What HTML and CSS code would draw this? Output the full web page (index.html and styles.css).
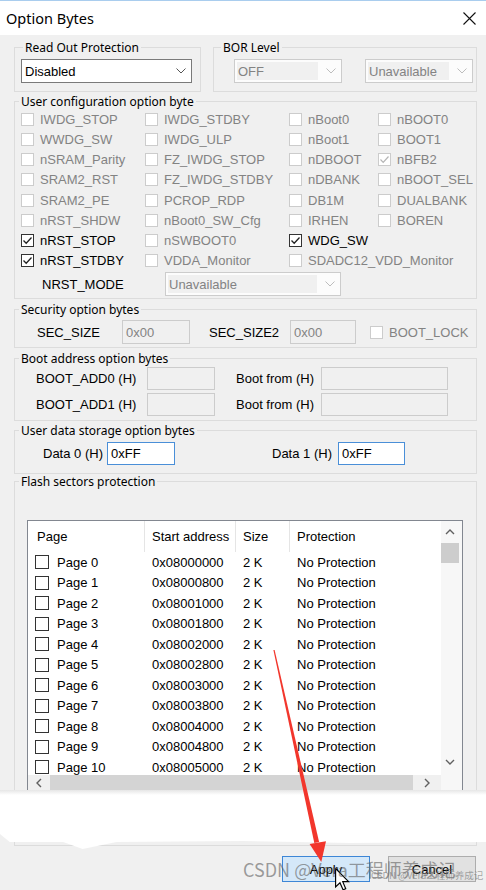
FILE: index.html
```html
<!DOCTYPE html>
<html>
<head>
<meta charset="utf-8">
<link rel="stylesheet" href="styles.css">
</head>
<body>
<div class="window">
  <div class="titlebar">
    <span class="title">Option Bytes</span>
    <svg class="close" width="13" height="13" viewBox="0 0 13 13"><path d="M0.5 0.5 L12.5 12.5 M12.5 0.5 L0.5 12.5" stroke="#111" stroke-width="1.1" fill="none"/></svg>
  </div>

  <div class="client">
    <div class="toprow">
      <div class="group g-rop">
        <span class="legend">Read Out Protection</span>
        <div class="combo rop-combo"><span class="val">Disabled</span><svg width="10" height="6" viewBox="0 0 10 6"><path d="M0.5 0.5 L5 5 L9.5 0.5" fill="none" stroke="#555"/></svg></div>
      </div>
      <div class="group g-bor">
        <span class="legend">BOR Level</span>
        <div class="bor-row">
          <div class="combo dis"><span class="val">OFF</span><svg width="10" height="6" viewBox="0 0 10 6"><path d="M0.5 0.5 L5 5 L9.5 0.5" fill="none" stroke="#bdbdbd"/></svg></div>
          <div class="combo dis"><span class="val">Unavailable</span><svg width="10" height="6" viewBox="0 0 10 6"><path d="M0.5 0.5 L5 5 L9.5 0.5" fill="none" stroke="#bdbdbd"/></svg></div>
        </div>
      </div>
    </div>

    <div class="group g-user">
      <span class="legend wide">User configuration option byte</span>
      <div class="opts">
        <label class="opt dis"><span class="box"></span>IWDG_STOP</label>
        <label class="opt dis"><span class="box"></span>IWDG_STDBY</label>
        <label class="opt dis"><span class="box"></span>nBoot0</label>
        <label class="opt dis"><span class="box"></span>nBOOT0</label>

        <label class="opt dis"><span class="box"></span>WWDG_SW</label>
        <label class="opt dis"><span class="box"></span>IWDG_ULP</label>
        <label class="opt dis"><span class="box"></span>nBoot1</label>
        <label class="opt dis"><span class="box"></span>BOOT1</label>

        <label class="opt dis"><span class="box"></span>nSRAM_Parity</label>
        <label class="opt dis"><span class="box"></span>FZ_IWDG_STOP</label>
        <label class="opt dis"><span class="box"></span>nDBOOT</label>
        <label class="opt dis"><span class="box"><svg width="11" height="11" viewBox="0 0 11 11"><path d="M1.5 5.5 L4.2 8.3 L9.5 2.5" fill="none" stroke="#b5b5b5" stroke-width="1.2"/></svg></span>nBFB2</label>

        <label class="opt dis"><span class="box"></span>SRAM2_RST</label>
        <label class="opt dis"><span class="box"></span>FZ_IWDG_STDBY</label>
        <label class="opt dis"><span class="box"></span>nDBANK</label>
        <label class="opt dis"><span class="box"></span>nBOOT_SEL</label>

        <label class="opt dis"><span class="box"></span>SRAM2_PE</label>
        <label class="opt dis"><span class="box"></span>PCROP_RDP</label>
        <label class="opt dis"><span class="box"></span>DB1M</label>
        <label class="opt dis"><span class="box"></span>DUALBANK</label>

        <label class="opt dis"><span class="box"></span>nRST_SHDW</label>
        <label class="opt dis"><span class="box"></span>nBoot0_SW_Cfg</label>
        <label class="opt dis"><span class="box"></span>IRHEN</label>
        <label class="opt dis"><span class="box"></span>BOREN</label>

        <label class="opt"><span class="box"><svg width="11" height="11" viewBox="0 0 11 11"><path d="M1.5 5.5 L4.2 8.3 L9.5 2.5" fill="none" stroke="#222" stroke-width="1.3"/></svg></span>nRST_STOP</label>
        <label class="opt dis"><span class="box"></span>nSWBOOT0</label>
        <label class="opt"><span class="box"><svg width="11" height="11" viewBox="0 0 11 11"><path d="M1.5 5.5 L4.2 8.3 L9.5 2.5" fill="none" stroke="#222" stroke-width="1.3"/></svg></span>WDG_SW</label>
        <span></span>

        <label class="opt"><span class="box"><svg width="11" height="11" viewBox="0 0 11 11"><path d="M1.5 5.5 L4.2 8.3 L9.5 2.5" fill="none" stroke="#222" stroke-width="1.3"/></svg></span>nRST_STDBY</label>
        <label class="opt dis"><span class="box"></span>VDDA_Monitor</label>
        <label class="opt dis"><span class="box"></span>SDADC12_VDD_Monitor</label>
        <span></span>
      </div>
      <div class="nrst">
        <span class="nrst-lbl">NRST_MODE</span>
        <div class="combo dis nrst-combo"><span class="val">Unavailable</span><svg width="10" height="6" viewBox="0 0 10 6"><path d="M0.5 0.5 L5 5 L9.5 0.5" fill="none" stroke="#bdbdbd"/></svg></div>
      </div>
    </div>

    <div class="group g-sec">
      <span class="legend wide">Security option bytes</span>
      <div class="fieldrow sec-row">
        <span class="lbl w85">SEC_SIZE</span>
        <span class="tb w68">0x00</span>
        <span class="lbl w81 ml19">SEC_SIZE2</span>
        <span class="tb w66">0x00</span>
        <label class="opt dis ml14"><span class="box"></span>BOOT_LOCK</label>
      </div>
    </div>

    <div class="group g-boot">
      <span class="legend wide">Boot address option bytes</span>
      <div class="fieldrow boot-row r1">
        <span class="lbl w111">BOOT_ADD0 (H)</span>
        <span class="tb w68"></span>
        <span class="lbl w85 ml21">Boot from (H)</span>
        <span class="tb w127"></span>
      </div>
      <div class="fieldrow boot-row r2">
        <span class="lbl w111">BOOT_ADD1 (H)</span>
        <span class="tb w68"></span>
        <span class="lbl w85 ml21">Boot from (H)</span>
        <span class="tb w127"></span>
      </div>
    </div>

    <div class="group g-data">
      <span class="legend wide">User data storage option bytes</span>
      <div class="fieldrow data-row">
        <span class="lbl w64">Data 0 (H)</span>
        <span class="tb focus w68">0xFF</span>
        <span class="lbl w66 ml97">Data 1 (H)</span>
        <span class="tb focus w67">0xFF</span>
      </div>
    </div>

    <div class="group g-flash">
      <span class="legend wide">Flash sectors protection</span>
      <div class="listbox">
        <div class="lb-main">
          <div class="lb-cols">
            <div class="lb-head">
              <span class="c1">Page</span>
              <span class="c2 hd">Start address</span>
              <span class="c3 hd">Size</span>
              <span class="c4 hd">Protection</span>
            </div>
            <div class="lb-rows">
              <div class="lb-row"><span class="c1"><span class="lbox"></span>Page 0</span><span class="c2">0x08000000</span><span class="c3">2 K</span><span class="c4">No Protection</span></div>
              <div class="lb-row"><span class="c1"><span class="lbox"></span>Page 1</span><span class="c2">0x08000800</span><span class="c3">2 K</span><span class="c4">No Protection</span></div>
              <div class="lb-row"><span class="c1"><span class="lbox"></span>Page 2</span><span class="c2">0x08001000</span><span class="c3">2 K</span><span class="c4">No Protection</span></div>
              <div class="lb-row"><span class="c1"><span class="lbox"></span>Page 3</span><span class="c2">0x08001800</span><span class="c3">2 K</span><span class="c4">No Protection</span></div>
              <div class="lb-row"><span class="c1"><span class="lbox"></span>Page 4</span><span class="c2">0x08002000</span><span class="c3">2 K</span><span class="c4">No Protection</span></div>
              <div class="lb-row"><span class="c1"><span class="lbox"></span>Page 5</span><span class="c2">0x08002800</span><span class="c3">2 K</span><span class="c4">No Protection</span></div>
              <div class="lb-row"><span class="c1"><span class="lbox"></span>Page 6</span><span class="c2">0x08003000</span><span class="c3">2 K</span><span class="c4">No Protection</span></div>
              <div class="lb-row"><span class="c1"><span class="lbox"></span>Page 7</span><span class="c2">0x08003800</span><span class="c3">2 K</span><span class="c4">No Protection</span></div>
              <div class="lb-row"><span class="c1"><span class="lbox"></span>Page 8</span><span class="c2">0x08004000</span><span class="c3">2 K</span><span class="c4">No Protection</span></div>
              <div class="lb-row"><span class="c1"><span class="lbox"></span>Page 9</span><span class="c2">0x08004800</span><span class="c3">2 K</span><span class="c4">No Protection</span></div>
              <div class="lb-row"><span class="c1"><span class="lbox"></span>Page 10</span><span class="c2">0x08005000</span><span class="c3">2 K</span><span class="c4">No Protection</span></div>
            </div>
          </div>
          <div class="vscroll">
            <div class="arrow up"><svg width="10" height="6" viewBox="0 0 10 6"><path d="M1 5 L5 1 L9 5" fill="none" stroke="#606060" stroke-width="1.4"/></svg></div>
            <div class="thumb"></div>
            <div class="spacer"></div>
            <div class="arrow down"><svg width="10" height="6" viewBox="0 0 10 6"><path d="M1 1 L5 5 L9 1" fill="none" stroke="#606060" stroke-width="1.4"/></svg></div>
          </div>
        </div>
        <div class="hscroll">
          <div class="htrack">
            <div class="harrow left"><svg width="6" height="10" viewBox="0 0 6 10"><path d="M5 1 L1 5 L5 9" fill="none" stroke="#606060" stroke-width="1.4"/></svg></div>
            <div class="hthumb"></div>
            <div class="harrow right"><svg width="6" height="10" viewBox="0 0 6 10"><path d="M1 1 L5 5 L1 9" fill="none" stroke="#606060" stroke-width="1.4"/></svg></div>
          </div>
          <div class="corner"></div>
        </div>
      </div>
    </div>
  </div>

  <div class="buttons">
    <span class="btn primary">Apply</span>
    <span class="btn">Cancel</span>
  </div>

  <div class="smear"></div>

  <svg class="annot" width="486" height="890" viewBox="0 0 486 890">
    <polygon points="273.4,650.1 274.6,649.9 319.1,842.0 314.3,843.0" fill="#f2362c"/>
    <polygon points="309.6,844.0 326.0,841.2 321.3,862" fill="#f2362c"/>
  </svg>

  <svg class="cursor" width="15" height="23" viewBox="0 0 13 20"><path d="M0.5 0.5 L0.5 16.5 L4.3 12.8 L7 19 L9.3 18 L6.7 11.9 L11.8 11.9 Z" fill="#fff" stroke="#000" stroke-width="1" stroke-linejoin="miter"/></svg>

  <div class="wm-big">CSDN @Vera工程师养成记</div>
  <div class="wm-small">CSDN @Vera工程师养成记</div>
</div>
</body>
</html>
```

FILE: styles.css
```css
html, body {
  margin: 0;
  padding: 0;
}
body {
  background: #f0f0f0;
  font-family: "Liberation Sans", Arial, sans-serif;
  font-size: 13px;
  color: #000;
}
.window {
  position: relative;
  width: 486px;
  height: 890px;
  overflow: hidden;
  background: #f0f0f0;
}
.titlebar {
  height: 35px;
  box-sizing: border-box;
  border-top: 1px solid #a9cdee;
  background: #fff;
  display: flex;
  align-items: center;
  justify-content: space-between;
  padding: 0 10px 0 6px;
}
.title {
  font-family: "Noto Sans", sans-serif;
  font-size: 14.5px;
  color: #000;
}
.close {
  display: block;
}
.client {
  padding: 12px 9px 0 14px;
  display: flex;
  flex-direction: column;
}
.toprow {
  display: flex;
  gap: 12px;
}
.group {
  border: 1px solid #dcdcdc;
  box-sizing: border-box;
  display: flex;
  flex-direction: column;
}
.legend {
  align-self: flex-start;
  margin: -8px 0 0 8px;
  padding: 0 2px;
  height: 15px;
  line-height: 15px;
  background: #f0f0f0;
  font-family: "Noto Sans", sans-serif;
  font-size: 12px;
  white-space: nowrap;
}
.legend.wide {
  margin-left: 4px;
}
.g-rop {
  width: 187px;
  height: 45px;
  flex: none;
}
.g-bor {
  flex: 1;
  height: 45px;
}
.g-bor .legend {
  margin-left: 7px;
}
.combo {
  box-sizing: border-box;
  height: 24px;
  border: 1px solid #7a7a7a;
  background: #fff;
  display: flex;
  align-items: center;
  justify-content: space-between;
  padding: 0 5px 0 3px;
  white-space: nowrap;
}
.combo svg {
  flex: none;
  align-self: center;
}
.rop-combo {
  margin: 4px 0 0 6px;
  width: 171px;
}
.bor-row {
  display: flex;
  gap: 23px;
  margin: 4px 0 0 20px;
}
.bor-row .combo {
  width: 108px;
}
.combo.dis {
  border-color: #cccccc;
  background: #fcfcfc;
  color: #838383;
  padding: 2px 5px 2px 2px;
  align-items: stretch;
}
.combo.dis .val {
  flex: 1;
  background: #f0f0f0;
  display: flex;
  align-items: center;
  padding-left: 1px;
  margin-right: 8px;
}
.g-user {
  height: 198px;
  margin-top: 9px;
}
.opts {
  display: grid;
  grid-template-columns: 124px 144px 89px 1fr;
  grid-template-rows: 20px 20px 20px 21px 20px 20px 20px 20px;
  padding-left: 6px;
}
.opt {
  display: flex;
  align-items: center;
  white-space: nowrap;
}
.opt.dis {
  color: #838383;
}
.box {
  width: 13px;
  height: 13px;
  box-sizing: border-box;
  border: 1px solid #333;
  background: #fff;
  margin-right: 6px;
  flex: none;
  display: flex;
  align-items: center;
  justify-content: center;
}
.opt.dis .box {
  border-color: #cccccc;
}
.nrst {
  display: flex;
  align-items: center;
  margin-top: 2px;
  padding-left: 27px;
}
.nrst-lbl {
  width: 123px;
  flex: none;
}
.nrst-combo {
  width: 176px;
}
.g-sec {
  height: 39px;
  margin-top: 10px;
}
.fieldrow {
  display: flex;
  align-items: center;
  white-space: nowrap;
}
.sec-row {
  margin-top: 3px;
  height: 24px;
  padding-left: 22px;
}
.lbl {
  flex: none;
}
.tb {
  box-sizing: border-box;
  height: 24px;
  border: 1px solid #cccccc;
  background: #f0f0f0;
  color: #838383;
  padding-left: 3px;
  display: flex;
  align-items: center;
  flex: none;
}
.tb.focus {
  border-color: #4a8fd8;
  background: #fff;
  color: #000;
  height: 23px;
}
.w64 { width: 64px; }
.w66 { width: 66px; }
.w67 { width: 67px; }
.w68 { width: 68px; }
.w81 { width: 81px; }
.w85 { width: 85px; }
.w111 { width: 111px; }
.w127 { width: 127px; }
.ml14 { margin-left: 14px; }
.ml19 { margin-left: 19px; }
.ml21 { margin-left: 21px; }
.ml97 { margin-left: 97px; }
.g-boot {
  height: 63px;
  margin-top: 10px;
}
.boot-row {
  padding-left: 21px;
  height: 23px;
}
.boot-row .tb {
  height: 23px;
}
.boot-row.r1 {
  margin-top: 1px;
}
.boot-row.r2 {
  margin-top: 3px;
}
.g-data {
  height: 44px;
  margin-top: 9px;
}
.data-row {
  margin-top: 4px;
  height: 23px;
  padding-left: 28px;
}
.g-flash {
  height: 365px;
  margin-top: 7px;
}
.listbox {
  margin: 31px 0 0 12px;
  width: 436px;
  height: 271px;
  box-sizing: border-box;
  border: 1px solid #828790;
  background: #fff;
  display: flex;
  flex-direction: column;
}
.lb-main {
  display: flex;
  height: 254px;
}
.lb-cols {
  width: 413px;
  overflow: hidden;
}
.lb-head {
  display: flex;
  height: 31px;
}
.lb-head span {
  display: flex;
  align-items: center;
  box-sizing: border-box;
}
.c1 { width: 116px; padding-left: 9px; }
.c2 { width: 91px; padding-left: 8px; }
.c3 { width: 54px; padding-left: 8px; }
.c4 { width: 152px; padding-left: 8px; }
.lb-head .hd {
  border-left: 1px solid #e5e5e5;
  padding-left: 7px;
}
.lb-rows {
  height: 223px;
  overflow: hidden;
}
.lb-row {
  display: flex;
  height: 20.5px;
  align-items: center;
  white-space: nowrap;
}
.lb-row span {
  box-sizing: border-box;
  display: flex;
  align-items: center;
}
.lb-row .c1 {
  padding-left: 7px;
}
.lbox {
  width: 14px;
  height: 14px;
  box-sizing: border-box;
  border: 1px solid #333;
  background: #fff;
  margin-right: 8px;
  flex: none;
}
.vscroll {
  width: 21px;
  background: #f7f7f7;
  display: flex;
  flex-direction: column;
}
.arrow {
  display: flex;
  align-items: center;
  justify-content: center;
  padding-right: 3px;
}
.arrow.up {
  height: 22px;
}
.arrow.down {
  height: 26px;
}
.thumb {
  height: 20px;
  width: 18px;
  background: #cdcdcd;
}
.spacer {
  flex: 1;
}
.hscroll {
  display: flex;
  height: 15px;
}
.htrack {
  width: 413px;
  display: flex;
  background: #f0f0f0;
}
.harrow {
  display: flex;
  align-items: center;
  justify-content: center;
}
.harrow.left {
  width: 22px;
}
.hthumb {
  width: 363px;
  background: #d4d4d4;
}
.harrow.right {
  flex: 1;
}
.corner {
  flex: 1;
  background: #f7f7f7;
}
.buttons {
  display: flex;
  justify-content: flex-end;
  gap: 18px;
  margin-top: 10px;
  padding-right: 10px;
}
.btn {
  width: 88px;
  height: 26px;
  box-sizing: border-box;
  border: 1px solid #adadad;
  background: #e1e1e1;
  display: flex;
  align-items: center;
  justify-content: center;
}
.btn.primary {
  border-color: #3d86d6;
  background: #d4e8f9;
}
.smear {
  position: absolute;
  left: 0;
  top: 790px;
  width: 486px;
  height: 60px;
  background: linear-gradient(#e6e6e6, #ffffff 5px);
  clip-path: polygon(0 0, 100% 0, 100% 52px, 72% 53px, 50% 51px, 24% 52px, 17% 59px, 13% 52px, 2% 52px, 0 44px);
}
.annot {
  position: absolute;
  left: 0;
  top: 0;
  pointer-events: none;
}
.cursor {
  position: absolute;
  left: 335px;
  top: 868px;
}
.wm-big {
  position: absolute;
  left: 243px;
  top: 858px;
  font-family: "Noto Sans CJK SC", "Noto Sans", sans-serif;
  font-size: 18px;
  line-height: 22px;
  color: rgba(95, 95, 95, 0.6);
  white-space: nowrap;
  pointer-events: none;
}
.wm-small {
  position: absolute;
  left: 371px;
  top: 869px;
  font-family: "Noto Sans CJK SC", "Noto Sans", sans-serif;
  font-size: 9.5px;
  line-height: 12px;
  color: rgba(120, 120, 120, 0.65);
  white-space: nowrap;
  pointer-events: none;
}
```
